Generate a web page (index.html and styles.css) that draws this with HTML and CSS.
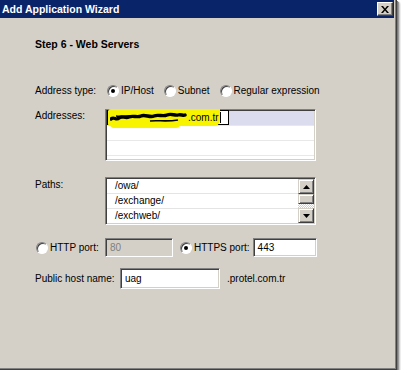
FILE: index.html
```html
<!DOCTYPE html>
<html>
<head>
<meta charset="utf-8">
<link rel="stylesheet" href="styles.css">
</head>
<body>
<div class="window">
  <div class="titlebar">
    <span class="title">Add Application Wizard</span>
    <span class="close"><svg width="8" height="7" viewBox="0 0 8 7"><path d="M0 0h2l2 2.5L6 0h2L5 3.5 8 7H6L4 4.5 2 7H0l3-3.5z" fill="#000"/></svg></span>
  </div>
  <div class="content">
    <div class="heading">Step 6 - Web Servers</div>

    <div class="row type-row">
      <span class="label">Address type:</span>
      <span class="opt"><span class="radio checked"></span>IP/Host</span>
      <span class="opt"><span class="radio"></span>Subnet</span>
      <span class="opt"><span class="radio"></span>Regular expression</span>
    </div>

    <div class="row addr-row">
      <span class="label label-top">Addresses:</span>
      <div class="listbox addr-list">
        <div class="lrow sel">
          <div class="edit">
            <span class="hl"><svg class="scribble" width="78" height="12" viewBox="0 0 78 12"><path d="M1 7c3-3 5 2 8-1s6 1 10-1 8 1 12-1 9 2 13 0 9 1 13-1 8 1 11 0 5 1 7 0" fill="none" stroke="#000" stroke-width="3.4" stroke-linecap="round"/><path d="M6 4c6 1 14-1 20 0M40 9c8-1 16 1 28-1" fill="none" stroke="#000" stroke-width="1.6"/></svg><span class="etext">.com.tr</span><span class="caret"></span></span>
          </div>
        </div>
        <div class="lrow"></div>
        <div class="lrow"></div>
      </div>
    </div>

    <div class="row paths-row">
      <span class="label label-top2">Paths:</span>
      <div class="listbox paths-list">
        <div class="items">
          <div class="prow">/owa/</div>
          <div class="prow">/exchange/</div>
          <div class="prow last">/exchweb/</div>
        </div>
        <div class="scrollbar">
          <div class="sbtn"><svg width="7" height="4" viewBox="0 0 7 4"><path d="M3.5 0L7 4H0z" fill="#000"/></svg></div>
          <div class="thumb"></div>
          <div class="track"></div>
          <div class="sbtn"><svg width="7" height="4" viewBox="0 0 7 4"><path d="M0 0h7L3.5 4z" fill="#000"/></svg></div>
        </div>
      </div>
    </div>

    <div class="row port-row">
      <span class="opt port-first"><span class="radio"></span>HTTP port:</span>
      <div class="input disabled port-in">80</div>
      <span class="opt https"><span class="radio checked"></span>HTTPS port:</span>
      <div class="input https-in">443</div>
    </div>

    <div class="row host-row">
      <span class="label host-label">Public host name:</span>
      <div class="input host-in">uag</div>
      <span class="suffix">.protel.com.tr</span>
    </div>
  </div>
</div>
</body>
</html>
```

FILE: styles.css
```css
html, body {
  margin: 0;
  padding: 0;
  background: #ffffff;
}
body {
  font-family: "Liberation Sans", Arial, sans-serif;
  font-size: 10px;
  line-height: 12px;
  color: #000;
}
.window {
  width: 397px;
  height: 370px;
  box-sizing: border-box;
  background: #d4d0c8;
  border-right: 1px solid #404040;
  border-bottom: 1px solid #404040;
  box-shadow: inset -1px -1px 0 #808080, 1px 1px 0 #7a7a7a, 2px 2px 1px #9a9a9a, 3px 3px 2px #c8c8c8;
  display: flex;
  flex-direction: column;
}
.titlebar {
  height: 18px;
  margin-right: 2px;
  background: #0a246a;
  display: flex;
  align-items: center;
  justify-content: space-between;
  padding: 0 1px 0 2px;
}
.title {
  color: #fff;
  font-weight: bold;
  font-size: 10.5px;
  line-height: 18px;
}
.close {
  width: 16px;
  height: 14px;
  box-sizing: border-box;
  background: #d4d0c8;
  border-top: 1px solid #fff;
  border-left: 1px solid #fff;
  border-right: 1px solid #404040;
  border-bottom: 1px solid #404040;
  box-shadow: inset -1px -1px 0 #808080;
  display: flex;
  align-items: center;
  justify-content: center;
}
.content {
  padding-left: 35px;
  display: flex;
  flex-direction: column;
}
.heading {
  margin-top: 20px;
  font-weight: bold;
  font-size: 10.5px;
  line-height: 12px;
}
.row {
  display: flex;
}
.label {
  width: 72px;
  flex: none;
}
.type-row {
  margin-top: 34px;
  height: 14px;
  align-items: center;
}
.opt {
  display: inline-flex;
  align-items: center;
  margin-right: 10px;
  white-space: nowrap;
}
.radio {
  width: 12px;
  height: 12px;
  box-sizing: border-box;
  border-radius: 50%;
  border: 1px solid;
  border-color: #808080 #fff #fff #808080;
  background: #fff;
  box-shadow: inset 1px 1px 0 #404040;
  margin-right: 2px;
  display: inline-flex;
  align-items: center;
  justify-content: center;
  flex: none;
}
.radio.checked::after {
  content: "";
  width: 4px;
  height: 4px;
  border-radius: 50%;
  background: #000;
}
.addr-row {
  margin-top: 11px;
}
.label-top {
  width: 70px;
  padding-top: 1px;
}
.label-top2 {
  width: 70px;
  padding-top: 2px;
}
.listbox {
  box-sizing: border-box;
  width: 211px;
  border: 1px solid;
  border-color: #808080 #fff #fff #808080;
  box-shadow: inset 1px 1px 0 #404040, inset -1px -1px 0 #d4d0c8;
  background: #fff;
  padding: 1px;
}
.addr-list {
  height: 52px;
}
.lrow {
  height: 14px;
  border-bottom: 1px solid #e8e8e8;
  position: relative;
}
.lrow.sel {
  background: #dcdcef;
}
.edit {
  position: absolute;
  left: 0;
  top: -1px;
  width: 122px;
  height: 15px;
  box-sizing: border-box;
  border: 1px solid #000;
  background: #fff;
}
.hl {
  position: absolute;
  left: 0;
  top: -2px;
  width: 112px;
  height: 17px;
  background: #f8f400;
  border-radius: 3px 0 6px 2px;
  display: flex;
  align-items: center;
  padding-left: 2px;
  box-sizing: border-box;
}
.hl::after {
  content: "";
  position: absolute;
  left: 2px;
  top: 15px;
  width: 70px;
  height: 4px;
  background: #f8f400;
  border-radius: 0 0 4px 4px;
}
.scribble {
  flex: none;
}
.etext {
  font-size: 10px;
}
.caret {
  width: 1px;
  height: 11px;
  background: #000;
  margin-left: 1px;
}
.paths-row {
  margin-top: 16px;
}
.paths-list {
  height: 48px;
  display: flex;
}
.items {
  flex: 1;
}
.prow {
  height: 14px;
  line-height: 14px;
  border-bottom: 1px solid #e4e4e4;
  padding-left: 8px;
}
.prow.last {
  border-bottom: none;
}
.scrollbar {
  width: 16px;
  display: flex;
  flex-direction: column;
  background: repeating-conic-gradient(#fff 0 25%, #d4d0c8 0 50%) 0 0 / 2px 2px;
}
.sbtn, .thumb {
  box-sizing: border-box;
  background: #d4d0c8;
  border-top: 1px solid #d4d0c8;
  border-left: 1px solid #d4d0c8;
  border-right: 1px solid #404040;
  border-bottom: 1px solid #404040;
  box-shadow: inset 1px 1px 0 #fff, inset -1px -1px 0 #808080;
  display: flex;
  align-items: center;
  justify-content: center;
}
.sbtn {
  height: 15px;
}
.thumb {
  height: 10px;
}
.track {
  flex: 1;
}
.port-row {
  margin-top: 13px;
  align-items: center;
}
.port-first {
  width: 70px;
  margin: 0 -1px 0 1px;
}
.input {
  box-sizing: border-box;
  height: 19px;
  border: 1px solid;
  border-color: #808080 #fff #fff #808080;
  box-shadow: inset 1px 1px 0 #404040, inset -1px -1px 0 #d4d0c8;
  background: #fff;
  padding: 3px 0 0 4px;
  line-height: 12px;
}
.input.disabled {
  background: #d4d0c8;
  color: #808080;
}
.port-in {
  width: 68px;
}
.https {
  margin-left: 7px;
  margin-right: 3px;
}
.https-in {
  width: 64px;
}
.host-row {
  margin-top: 11px;
  align-items: center;
}
.host-label {
  width: 85px;
}
.host-in {
  width: 100px;
  height: 21px;
  padding-top: 4px;
}
.suffix {
  margin-left: 7px;
}
```
